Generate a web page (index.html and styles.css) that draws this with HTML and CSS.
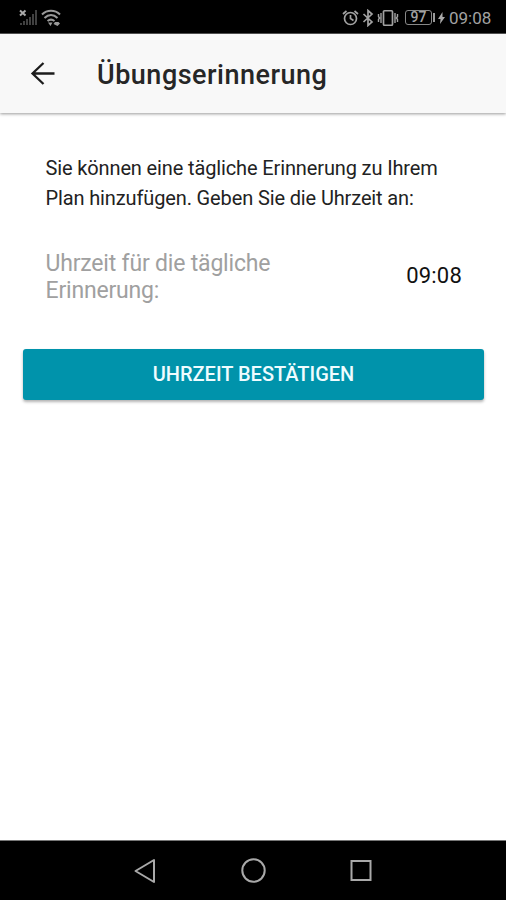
FILE: index.html
```html
<!DOCTYPE html>
<html lang="de">
<head>
<meta charset="utf-8">
<title>Übungserinnerung</title>
<link rel="stylesheet" href="styles.css">
</head>
<body>
<div class="screen">
  <div class="status">
    <svg class="signal" width="19" height="18" viewBox="0 0 19 18">
      <path d="M1 1.500l5.500 5M6.500 1.500L1 6.500" stroke="#aaa" stroke-width="2"/>
      <path d="M2 16v-2M5 16v-4M8 16v-6M11 16v-8M14 16V5M17 16V1" stroke="#404040" stroke-width="2"/>
    </svg>
    <svg class="wifi" width="20" height="18" viewBox="0 0 20 18" fill="none" stroke="#999" stroke-width="2">
      <path d="M1 5.500C6 .5 14 .5 19 5.500M3.500 9C7.500 5 12.500 5 16.500 9M6.500 12c2.500-2 4.500-2 7 0"/>
      <path d="M7 13.500h4.500L9.500 17zM12.500 15l1.500-2h3.500l1.500 1.500-2.500 2.500z" fill="#999" stroke="none"/>
    </svg>
    <span class="fill"></span>
    <svg class="alarm" width="17" height="18" viewBox="0 0 17 18" fill="none" stroke="#a2a2a2" stroke-width="1.700">
      <circle cx="8.500" cy="9.500" r="6"/><path d="M8.500 6v3.500l3 2M1 5l3.500-3M16 5l-3.500-3"/>
    </svg>
    <svg class="bluetooth" width="12" height="18" viewBox="0 0 12 18" fill="none" stroke="#a2a2a2" stroke-width="1.700">
      <path d="M1.500 5l8.500 8-4 3.500v-15L10 5l-8.500 8"/>
    </svg>
    <svg class="vibrate" width="22" height="18" viewBox="0 0 22 18" fill="none" stroke="#a2a2a2" stroke-width="1.700">
      <rect x="6.500" y="1.750" width="9" height="14.500" rx="1"/><path d="M1.500 5v2.500l1 1.500-1 1.500V13M4 4v10M18 4v10M20.500 5v2.500l-1 1.500 1 1.500V13" stroke-width="1.400"/>
    </svg>
    <div class="battery"><span class="level">97</span><i class="tip"></i></div>
    <svg class="bolt" width="7" height="14" viewBox="0 0 7 14"><path d="M4.500 1L0 8h2.500L2 13 7 6H4.500z" fill="#aaa"/></svg>
    <span class="clock">09:08</span>
  </div>
  <header class="header">
    <svg class="back" width="26" height="26" viewBox="0 0 26 26" fill="none" stroke="#1c1c1c" stroke-width="2.300"><path d="M24.500 12.500H3M13.500 2L2.500 12.500 13.500 23"/></svg>
    <h1 class="title">Übungserinnerung</h1>
  </header>
  <main class="content">
    <p class="intro">Sie können eine tägliche Erinnerung zu Ihrem<br>Plan hinzufügen. Geben Sie die Uhrzeit an:</p>
    <div class="row">
      <label class="label">Uhrzeit für die tägliche<br>Erinnerung:</label>
      <span class="time">09:08</span>
    </div>
    <button class="confirm">UHRZEIT BESTÄTIGEN</button>
  </main>
  <nav class="nav">
    <svg width="24" height="26" viewBox="0 0 24 26" fill="none" stroke="#a9a9a9" stroke-width="2"><path d="M21 2v22L2.500 13z" stroke-linejoin="round"/></svg>
    <svg width="26" height="26" viewBox="0 0 26 26" fill="none" stroke="#a9a9a9" stroke-width="2"><circle cx="13.500" cy="12.500" r="11.200"/></svg>
    <svg width="24" height="26" viewBox="0 0 24 26" fill="none" stroke="#a9a9a9" stroke-width="2"><rect x="2.500" y="3" width="19" height="19"/></svg>
  </nav>
</div>
</body>
</html>
```
FILE: styles.css
```css
* { box-sizing: border-box; }
body { margin: 0; background: #fff; font-family: Roboto, "Liberation Sans", sans-serif; }
.screen { width: 506px; height: 900px; display: flex; flex-direction: column; overflow: hidden; }
.status { height: 34px; flex: none; background: #000; display: flex; align-items: center; padding: 2px 15px 0 19px; color: #a2a2a2; border-bottom: 1px solid #555; }
.status svg { flex: none; }
.wifi { margin-left: 3px; }
.fill { flex: 1; }
.bluetooth { margin-left: 3px; }
.vibrate { margin-left: 3px; }
.battery { display: flex; align-items: center; margin-left: 6px; }
.level { width: 27px; height: 15px; border: 1px solid #888; border-radius: 3px; font-size: 14px; line-height: 13px; text-align: center; font-weight: 500; }
.tip { width: 2px; height: 9px; background: #999; margin-left: 1px; }
.bolt { margin-left: 3px; }
.clock { margin-left: 4px; width: 42px; font-size: 17px; line-height: 20px; white-space: nowrap; }
.header { height: 79px; flex: none; display: flex; align-items: center; padding-left: 30px; background: #f8f8f8; box-shadow: 0 1px 3px rgba(0, 0, 0, .4); }
.title { margin: 2px 0 0 41px; font-size: 27px; line-height: 34px; font-weight: 500; letter-spacing: .5px; color: #262626; white-space: nowrap; }
.content { flex: 1; padding: 41px 22px 0 23px; }
.intro { margin: 0 0 0 22.5px; font-size: 20px; line-height: 29.5px; letter-spacing: -.13px; color: #222; white-space: nowrap; }
.row { display: flex; justify-content: space-between; align-items: center; margin: 36px 22px 0 22.5px; }
.label { padding-top: 1px; font-size: 23px; line-height: 27px; letter-spacing: -.19px; color: #a0a0a0; white-space: nowrap; }
.time { padding-bottom: 2px; font-size: 22px; line-height: 28px; letter-spacing: .2px; color: #111; }
.confirm { display: block; width: 100%; height: 51px; margin-top: 45px; padding: 0 0 2px; border: 0; border-radius: 3px; background: #0093ab; color: #effcff; font: 500 20px/24px Roboto, "Liberation Sans", sans-serif; box-shadow: 0 2px 3px rgba(0, 0, 0, .3); }
.nav { height: 60px; flex: none; background: #000; border-top: 1px solid #777; display: flex; justify-content: space-between; align-items: center; padding: 0 133px; }
```
